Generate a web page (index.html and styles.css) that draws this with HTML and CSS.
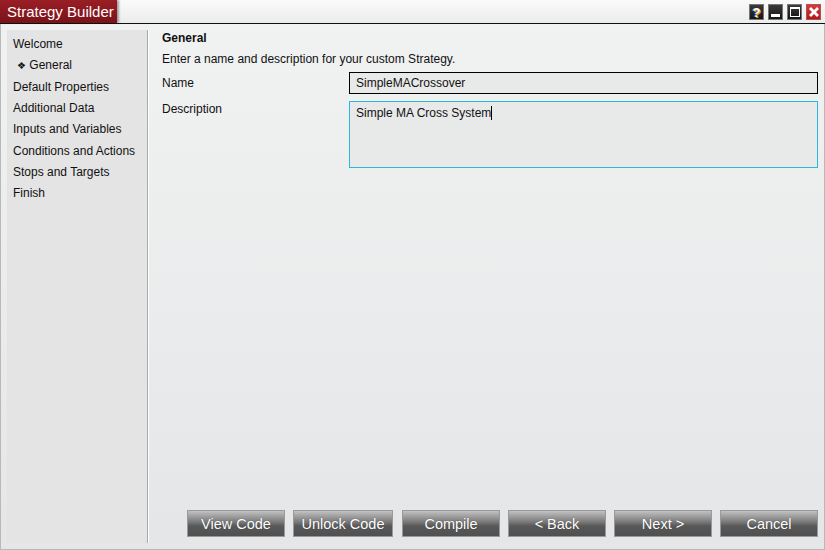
FILE: index.html
```
<!DOCTYPE html>
<html lang="en">

<head>
    <meta charset="utf-8">
    <title>Strategy Builder</title>
    <link rel="stylesheet" href="styles.css">
</head>

<body>
    <div class="window">
        <header class="titlebar">
            <div class="title_tab">Strategy Builder</div>
            <div class="win_buttons">
                <span class="win_btn help">?</span>
                <span class="win_btn"><i class="min_bar"></i></span>
                <span class="win_btn"><i class="max_box"></i></span>
                <span class="win_btn close">
                    <svg width="12" height="12" viewBox="0 0 12 12">
                        <path d="M1 3 L3 1 L6 4 L9 1 L11 3 L8 6 L11 9 L9 11 L6 8 L3 11 L1 9 L4 6 Z" fill="#fff" />
                    </svg>
                </span>
            </div>
        </header>

        <div class="body">
            <nav class="steps">
                <p>Welcome</p>
                <p class="current"><span class="mark">&#10070;</span> General</p>
                <p>Default Properties</p>
                <p>Additional Data</p>
                <p>Inputs and Variables</p>
                <p>Conditions and Actions</p>
                <p>Stops and Targets</p>
                <p>Finish</p>
            </nav>

            <main class="content">
                <h2>General</h2>
                <p class="intro">Enter a name and description for your custom Strategy.</p>

                <div class="field">
                    <label>Name</label>
                    <div class="input">SimpleMACrossover</div>
                </div>
                <div class="field">
                    <label class="top">Description</label>
                    <div class="input area">Simple MA Cross System<span class="caret"></span></div>
                </div>

                <div class="buttons">
                    <button>View Code</button>
                    <button class="wide">Unlock Code</button>
                    <button>Compile</button>
                    <button>&lt; Back</button>
                    <button>Next &gt;</button>
                    <button>Cancel</button>
                </div>
            </main>
        </div>
    </div>
</body>

</html>
```
FILE: styles.css
```
* {
    margin: 0;
    padding: 0;
    box-sizing: border-box;
}

body {
    font-family: "Liberation Sans", Arial, sans-serif;
    font-size: 12px;
    color: #111;
    background-color: #e6e7e8;
}

.window {
    width: 825px;
    height: 550px;
    display: flex;
    flex-direction: column;
    border: 1px solid #b8b8b8;
    border-top: none;
    background: linear-gradient(#f1f2f2, #e5e6e7);
}

.titlebar {
    height: 24px;
    display: flex;
    justify-content: space-between;
    align-items: flex-start;
    border-bottom: 1px solid #111;
    background: linear-gradient(#fafafa, #ececec);
    margin: 0 -1px;
}

.title_tab {
    height: 23px;
    width: 117px;
    padding: 3px 0 0 7px;
    color: #fff;
    font-size: 15px;
    background: linear-gradient(#9a1e25, #7a1218);
    box-shadow: 2px 0 2px rgba(0, 0, 0, 0.35);
}

.win_buttons {
    display: flex;
    gap: 4px;
    padding: 4px 4px 0 0;
}

.win_btn {
    width: 15px;
    height: 16px;
    background: linear-gradient(#3a3a3a, #151515);
    border: 1px solid #777;
    display: flex;
    align-items: center;
    justify-content: center;
    color: #fff;
    font-weight: bold;
    font-size: 13px;
}

.help {
    color: #fff;
    text-shadow: 1px 1px 0 #f0a020, -1px 0 0 #3070d0;
}

.min_bar {
    width: 9px;
    height: 3px;
    margin-top: 7px;
    background-color: #fff;
}

.max_box {
    width: 10px;
    height: 10px;
    border: 1px solid #fff;
    border-top-width: 2px;
}

.close {
    background: linear-gradient(#d63a3a, #b31818);
    border-color: #a55;
}

.body {
    flex: 1;
    display: flex;
    padding: 6px 0 6px 6px;
}

.steps {
    width: 141px;
    background-color: #e4e4e4;
    padding: 7px 0 0 6px;
    border-right: 1px solid #a9a9a9;
    box-shadow: 1px 0 0 #fff;
}

.steps p {
    height: 21.35px;
    line-height: 15px;
}

.steps .current {
    padding-left: 4px;
}

.mark {
    font-size: 10px;
}

.content {
    flex: 1;
    display: flex;
    flex-direction: column;
    padding: 1px 6px 6px 14px;
}

h2 {
    font-size: 12px;
    font-weight: bold;
    height: 21px;
}

.intro {
    height: 20px;
}

.field {
    display: flex;
    margin-bottom: 7px;
}

.field label {
    width: 187px;
    padding-top: 4px;
}

.field label.top {
    padding-top: 1px;
}

.input {
    flex: 1;
    height: 22px;
    padding: 3px 6px;
    background-color: #e8e9e9;
    border: 1px solid #000;
}

.input.area {
    height: 67px;
    padding-top: 4px;
    border: 1px solid #2bb8e0;
}

.caret {
    display: inline-block;
    width: 1px;
    height: 14px;
    background-color: #000;
    vertical-align: -3px;
}

.buttons {
    margin-top: auto;
    display: flex;
    justify-content: flex-end;
    gap: 8px;
}

.buttons button {
    width: 98px;
    height: 27px;
    font-family: "Liberation Sans", Arial, sans-serif;
    font-size: 14.5px;
    color: #fff;
    border: 1px solid #999;
    background: linear-gradient(#c2c2c2, #777 45%, #585858 60%, #505050);
    text-shadow: 0 0 1px rgba(0, 0, 0, 0.4);
}

.buttons button.wide {
    width: 100px;
    margin-right: 1px;
}
```
